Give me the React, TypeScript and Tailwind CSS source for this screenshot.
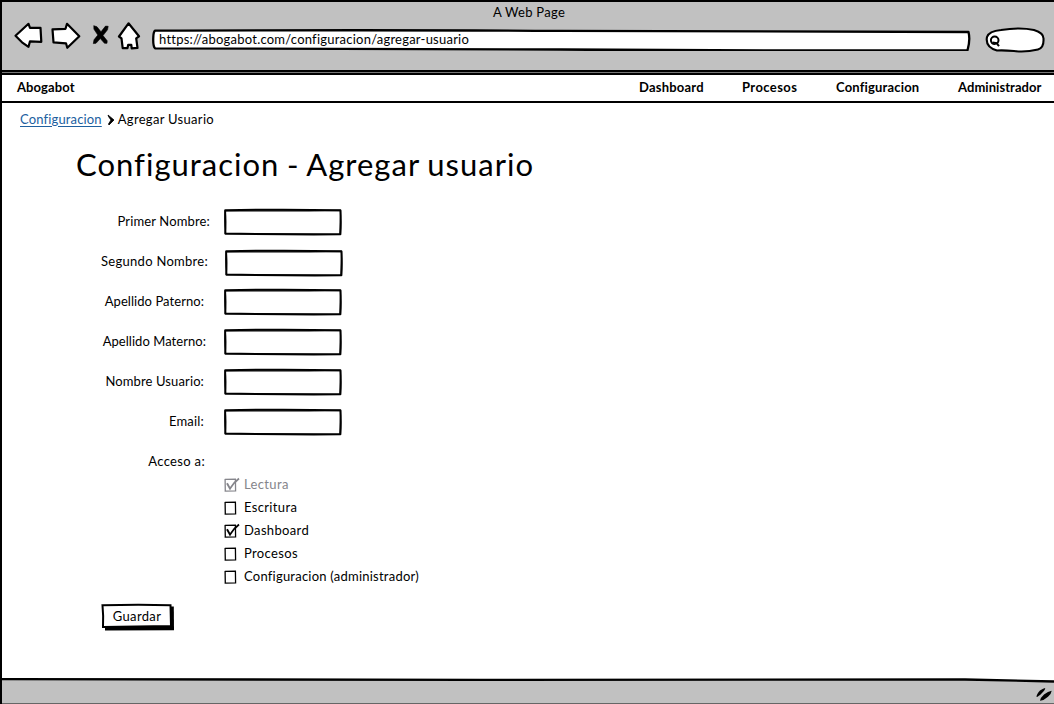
import { useState } from "react";

const fields = [
  { label: "Primer Nombre:", row: "pr-[14px] tracking-[0.14px]", box: "" },
  { label: "Segundo Nombre:", row: "pr-[16px] tracking-[0.28px]", box: "left-px top-px" },
  { label: "Apellido Paterno:", row: "pr-[20px] tracking-[0.06px]", box: "" },
  { label: "Apellido Materno:", row: "pr-[18px] tracking-[0.05px]", box: "" },
  { label: "Nombre Usuario:", row: "pr-[20px] tracking-[0.12px]", box: "" },
  { label: "Email:", row: "pr-[20px] tracking-[0.2px]", box: "" },
];

const permissions = [
  { label: "Lectura", checked: true, disabled: true },
  { label: "Escritura", checked: false, disabled: false },
  { label: "Dashboard", checked: true, disabled: false },
  { label: "Procesos", checked: false, disabled: false },
  { label: "Configuracion (administrador)", checked: false, disabled: false },
];

const navItems = [
  { label: "Dashboard", cls: "w-[103px] tracking-[0.22px]" },
  { label: "Procesos", cls: "w-[94px] tracking-[0.4px]" },
  { label: "Configuracion", cls: "w-[122px] tracking-[0.18px]" },
  { label: "Administrador", cls: "w-[96px] tracking-[0.06px]" },
];

function BrowserIcons() {
  return (
    <svg
      className="block h-[34px] w-[130px] shrink-0"
      viewBox="13 20.7 130 34"
      fill="#fff"
      stroke="#000"
      strokeWidth="2.2"
      strokeLinejoin="round"
      strokeLinecap="round"
    >
      <path d="M15.5 34.5 L28.5 22.5 L30 26.5 L40.5 26.5 L41.3 40.5 L30 40 L28.5 45.5 L22 41 Z" />
      <path d="M52.5 28 L65.5 27.5 L67 22.5 L79.3 35 L67.3 46.5 L66 42 L53.5 41 Z" />
      <path
        d="M94 24.5 L97 25.5 L101 30.5 L105.5 24.8 L108.2 25 L107.5 28.5 L103 34.3 L107.2 39.5 L107 42 L104.5 42 L100.3 37.3 L96 42 L93.3 42.3 L94 38.5 L97.8 33.8 L94 28 Z"
        fill="#000"
        strokeWidth="0.6"
      />
      <path d="M128.5 22 L139 35 L136.2 37 L137.5 46.5 L131.7 47 L131.3 43.5 L128.2 43.5 L127.5 46.8 L122.7 46.8 L121.5 37 L119 35.2 Z" />
    </svg>
  );
}

function TextBox({ label, box }: { label: string; box: string }) {
  return (
    <div className={`relative h-7 w-[119px] ${box}`}>
      <svg className="absolute inset-0 h-7 w-[119px]" viewBox="0 0 119 28" fill="none" stroke="#000" strokeLinejoin="round">
        <path
          d="M1.2 2.2 Q30 1.5 59 1.7 L116.4 2.2 Q117.2 14 116.4 26.3 Q60 26.7 1.4 25.4 Q0.9 14 1.2 2.2 Z"
          fill="#fff"
          strokeWidth="2"
        />
        <path d="M1.2 2.6 Q60 3.4 116.6 2.4 L116 26 Q60 26 1.2 25.8 Q2.4 14 1.2 2.4" strokeWidth="1.2" />
      </svg>
      <input aria-label={label} className="relative h-7 w-[119px] bg-transparent px-2 outline-none" />
    </div>
  );
}

function SketchCheck({ checked }: { checked: boolean }) {
  return (
    <svg className="block h-[17px] w-[17px]" viewBox="0 0 17 17" fill="none" stroke="currentColor">
      <path d="M0.8 3.4 L12 3.1 M11.4 2.8 L11.6 15.4 M12.2 14.9 L0.6 15.1 M1.3 15.4 L1.1 2.9" strokeWidth="1.3" />
      {checked && <path d="M3 7.2 L6 12.6 Q9.5 6.5 15 2.4" strokeWidth="1.9" />}
    </svg>
  );
}

export default function App() {
  const [state, setState] = useState(permissions.map((p) => p.checked));
  return (
    <div className="flex h-[704px] w-[1054px] flex-col overflow-hidden border-l-2 border-t-2 border-black bg-white font-['Lato',sans-serif] text-[13px] leading-5 text-black">
      <header className="h-[68px] shrink-0 bg-[#c1c1c1]">
        <div className="flex h-[20px] items-center justify-center pb-[2px] pl-0.5 pt-[2px] tracking-[0.28px]">A Web Page</div>
        <div className="flex h-10 items-start pl-[11px]">
          <BrowserIcons />
          <div className="relative ml-[8px] mt-[5px] h-6 w-[820px]">
            <svg className="absolute inset-0 h-6 w-[820px]" viewBox="0 0 820 24" fill="#fff" stroke="#000" strokeWidth="2.3" strokeLinejoin="round">
              <path d="M4 3.6 Q250 2.8 410 3.8 T817.5 5 Q819.5 13 816.5 23.3 Q620 24 410 22.5 T4 21.3 Q1.8 19 2.3 10 Q2.4 5 4 3.6 Z" />
            </svg>
            <div className="relative pl-[8px] pt-[2px] tracking-[0.23px]">https://abogabot.com/configuracion/agregar-usuario</div>
          </div>
          <svg className="ml-[13px] mt-[4px] block h-[28px] w-[62px]" viewBox="984 26 62 28" fill="#fff" stroke="#000" strokeWidth="2.1">
            <path d="M987 37 Q989 31 1001 30 Q1020 27 1034 30 Q1044 33 1043.5 39 Q1044 48 1038 49.5 Q1025 52.5 1014 51 Q1003 50 997 50.5 Q985 47 987 37 Z" />
            <circle cx="994.7" cy="40.3" r="3.8" strokeWidth="2" />
            <path d="M992.5 42.5 L996.5 43.2 L999 46.2" strokeWidth="2" />
          </svg>
        </div>
      </header>
      <div className="h-[5px] shrink-0 border-b-2 border-t-2 border-black bg-[#777]" />
      <nav className="flex h-[28px] shrink-0 items-center border-b-2 border-black pb-[2px] pl-[15px] font-bold">
        <span className="flex-1 tracking-[0.1px]">Abogabot</span>
        {navItems.map((n) => (
          <a key={n.label} className={`shrink-0 ${n.cls}`}>{n.label}</a>
        ))}
      </nav>
      <main className="flex min-h-0 flex-1 flex-col">
        <div className="flex h-[33px] items-center pb-[2px] pl-[18px]">
          <a className="text-[#20609f] underline underline-offset-2 tracking-[0.15px]">Configuracion</a>
          <svg className="ml-[5px] mr-[3px] mt-[3px] h-3 w-2" viewBox="0 0 8 12">
            <path d="M1 1 L7 6 L2 11 L1.5 10 L4 6 L1.8 3 Z" stroke="#000" strokeWidth="0.8" />
          </svg>
          <span className="tracking-[0.3px]">Agregar Usuario</span>
        </div>
        <h1 className="h-[67px] pl-[74px] pt-[6px] text-[31px] leading-[44px] tracking-[1.01px] [word-spacing:-1.3px]">Configuracion - Agregar usuario</h1>
        <form onSubmit={(e) => e.preventDefault()}>
          {fields.map((f) => (
            <div key={f.label} className="flex h-10">
              <div className={`w-[222px] pt-[8px] text-right ${f.row}`}>{f.label}</div>
              <div className="pt-[5px]"><TextBox label={f.label} box={f.box} /></div>
            </div>
          ))}
          <div className="h-[30px] w-[203px] pt-[8px] text-right tracking-[0.33px]">Acceso a:</div>
          <div className="pl-[222px]">
            {permissions.map((p, i) => (
              <label key={p.label} className={`flex h-[23px] items-center ${p.disabled ? "text-[#85858b]" : ""}`}>
                <input
                  type="checkbox"
                  className="sr-only"
                  checked={state[i]}
                  disabled={p.disabled}
                  onChange={() => setState(state.map((v, j) => (j === i ? !v : v)))}
                />
                <SketchCheck checked={state[i]} />
                <span className={`ml-[3px] pb-0.5 ${p.label.length > 20 ? "tracking-[0.23px]" : "tracking-[0.35px]"}`}>{p.label}</span>
              </label>
            ))}
          </div>
          <button className="relative ml-[99px] mt-[15px] block h-[28px] w-[75px]">
            <svg className="absolute inset-0 h-[28px] w-[75px]" viewBox="0 0 75 28">
              <path d="M4 4 L72.8 3.5 L73 27.2 L4 27.5 Z" />
              <path d="M1.5 2.3 Q35 1.4 69.5 2.2 L70 23 Q35 23.7 2 24 Q2.5 12 1.5 2.3 Z" fill="#fff" stroke="#000" strokeWidth="2" />
            </svg>
            <span className="relative -top-px right-[1.5px] tracking-[0.35px]">Guardar</span>
          </button>
        </form>
      </main>
      <footer className="flex h-[26px] shrink-0">
        <svg className="block h-[26px] w-[1052px]" viewBox="2 678 1052 26">
          <path d="M2 679.2 Q250 679 480 679.8 Q720 680 965 679.5 L1054 682 L1054 704 L2 704 Z" fill="#c1c1c1" />
          <path d="M2 679.2 Q250 679 480 679.8 Q720 680 965 679.5 L1054 681.5" fill="none" stroke="#000" strokeWidth="2.3" />
          <path d="M2 703.7 L1054 703.7" stroke="#333" strokeWidth="0.8" />
          <path d="M1036.5 697 Q1036.5 694 1040 690.5 Q1043.5 688 1045.2 688 Q1045.3 690 1042 693 Q1038.5 696.7 1036.5 697 Z M1040 700.8 Q1040.5 697.5 1044 694.5 Q1048 691.2 1051.7 690.7 Q1051.5 693.5 1048 696.8 Q1044 700.5 1040 700.8 Z" />
        </svg>
      </footer>
    </div>
  );
}
